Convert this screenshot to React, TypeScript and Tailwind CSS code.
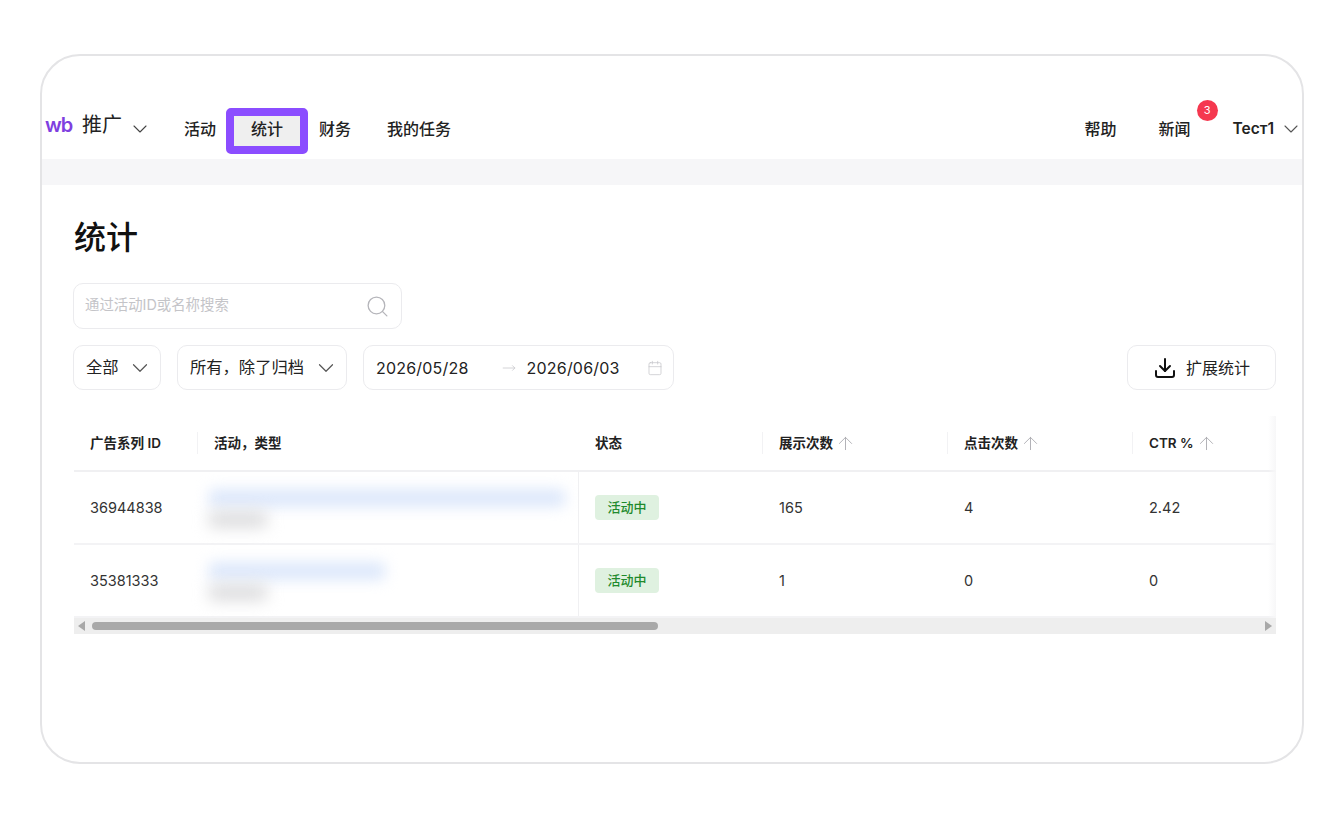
import React from 'react';
import { ChevronDown, Search, ArrowUp, MoveRight, Calendar, Download } from 'lucide-react';

const font = 'font-["Inter","Noto_Sans_CJK_SC",sans-serif]';

const columns = 'grid grid-cols-[123px_382px_183px_185px_185px_144px]';

const rows = [
    { id: '36944838', shows: '165', clicks: '4', ctr: '2.42', titleWidth: 'w-[356px]' },
    { id: '35381333', shows: '1', clicks: '0', ctr: '0', titleWidth: 'w-[176px]' },
];

function HeaderCell({ label, sort, divider }: { label: string; sort?: boolean; divider?: boolean }) {
    return (
        <div className={`flex items-center gap-[2px] pl-4 h-[22px] ${divider ? 'border-l border-[#f2f2f4]' : ''}`}>
            <span className="text-[13.5px] font-semibold text-[#222]">{label}</span>
            {sort && <ArrowUp size={21} strokeWidth={1} className="text-[#a8a8ae]" />}
        </div>
    );
}

function Select({ label, width }: { label: string; width: string }) {
    return (
        <div className={`flex items-center justify-between h-[45px] pl-3 pr-[7px] rounded-[10px] border border-[#ebebee] text-[16.3px] text-[#222] ${width}`}>
            <span>{label}</span>
            <ChevronDown size={26} strokeWidth={1.1} className="text-[#555]" />
        </div>
    );
}

function StatusBadge() {
    return (
        <span className="flex items-center justify-center w-[64px] h-[25px] rounded bg-[#dff1e0] text-[13px] font-medium text-[#1f8a2d]">
            活动中
        </span>
    );
}

export default function App() {
    return (
        <div className={`min-h-[818px] bg-white pt-[54px] px-[40px] ${font}`}>
            <div className="h-[710px] rounded-[40px] border-2 border-[#e4e4e6] overflow-hidden">
                {/* Top nav */}
                <div className="flex items-center justify-between h-[103px] pt-[42px] pl-[3px]">
                    <div className="flex items-center">
                        <span className="w-[28px] text-[20px] font-semibold leading-none text-[#7f3fe0] -mt-2 tracking-[-1px]">wb</span>
                        <span className="ml-[9px] text-xl text-[#222] -mt-2">推广</span>
                        <ChevronDown size={24} strokeWidth={1.1} className="ml-[6px] text-[#444]" />
                        <span className="ml-[32px] text-base font-medium text-[#222]">活动</span>
                        <span className="ml-[10px] mt-1 pb-1 flex items-center justify-center w-[82px] h-[46px] rounded-[5px] border-[8px] border-[#8b4dff] bg-[#efefef] text-base font-medium text-[#222]">
                            统计
                        </span>
                        <span className="ml-[11px] text-base font-medium text-[#222]">财务</span>
                        <span className="ml-[36px] text-base font-medium text-[#222]">我的任务</span>
                    </div>
                    <div className="flex items-center">
                        <span className="text-base font-medium text-[#222]">帮助</span>
                        <span className="relative ml-[42px] text-base font-medium text-[#222]">
                            新闻
                            <span className="absolute -top-[17px] left-[38px] flex items-center justify-center w-[21px] h-[21px] rounded-full bg-[#f5384f] text-[11px] font-normal text-white">
                                3
                            </span>
                        </span>
                        <span className="ml-[42px] text-[15.5px] font-semibold text-[#222]">Тест1</span>
                        <ChevronDown size={24} strokeWidth={1.1} className="ml-[5px] -mr-[1px] text-[#555]" />
                    </div>
                </div>
                <div className="h-[26px] bg-[#f6f6f8]" />

                {/* Page body */}
                <div className="pl-[31px] pr-[26px]">
                    <h1 className="mt-[31px] ml-px text-[32px] leading-[44px] font-medium text-[#111]">统计</h1>

                    <div className="mt-[23px] flex items-center justify-between w-[329px] h-[46px] pl-[11px] pr-[11px] rounded-[10px] border border-[#ebebee]">
                        <span className="pb-[3px] text-[14.4px] text-[#c4c4c8]">通过活动ID或名称搜索</span>
                        <Search size={25} strokeWidth={1.25} className="text-[#b5b5ba]" />
                    </div>

                    <div className="mt-4 flex items-center">
                        <Select label="全部" width="w-[88px]" />
                        <div className="ml-4">
                            <Select label="所有，除了归档" width="w-[170px]" />
                        </div>
                        <div className="ml-4 flex items-center w-[311px] h-[45px] pl-3 pr-[10px] rounded-[10px] border border-[#ebebee] text-base tracking-[0.2px] text-[#222]">
                            <span>2026/05/28</span>
                            <MoveRight size={14} strokeWidth={1.25} className="ml-[33px] text-[#c4c4c8]" />
                            <span className="ml-[11px]">2026/06/03</span>
                            <Calendar size={16} strokeWidth={1.1} className="ml-auto text-[#c4c4c8]" />
                        </div>
                        <div className="ml-auto flex items-center justify-center gap-[9px] w-[149px] h-[45px] rounded-[10px] border border-[#ebebee] text-base text-[#222]">
                            <Download size={24} strokeWidth={2} className="text-[#111]" />
                            <span>扩展统计</span>
                        </div>
                    </div>

                    {/* Table */}
                    <div className="relative mt-[26px] ml-px w-[1202px]">
                        <div className={`${columns} items-center h-[56px] border-b-2 border-[#f0f0f2]`}>
                            <HeaderCell label="广告系列 ID" />
                            <HeaderCell label="活动，类型" divider />
                            <HeaderCell label="状态" />
                            <HeaderCell label="展示次数" sort divider />
                            <HeaderCell label="点击次数" sort divider />
                            <HeaderCell label="CTR %" sort divider />
                        </div>
                        {rows.map((row) => (
                            <div key={row.id} className={`${columns} h-[73px] border-b-2 border-[#f3f3f5] last:border-b-0 last:h-[70px] text-[14.5px] text-[#333]`}>
                                <div className="flex items-center pl-4 pt-px">{row.id}</div>
                                <div className="flex flex-col justify-center gap-[5px] pl-[12px] border-r border-[#f0f0f2]">
                                    <div className={`h-[18px] rounded bg-[#dde8fb] blur-[7px] ${row.titleWidth}`} />
                                    <div className="h-[15px] w-[58px] rounded bg-[#d9d9db] blur-[8px]" />
                                </div>
                                <div className="flex items-center pl-4"><StatusBadge /></div>
                                <div className="flex items-center pl-[17px] pt-px">{row.shows}</div>
                                <div className="flex items-center pl-[17px] pt-px">{row.clicks}</div>
                                <div className="flex items-center pl-[17px] pt-px">{row.ctr}</div>
                            </div>
                        ))}
                        {/* Scrollbar */}
                        <div className="flex items-center h-4 bg-[#eeeeee] px-[4px]">
                            <span className="w-0 h-0 border-y-[5px] border-y-transparent border-r-[7px] border-r-[#a8a8a8]" />
                            <div className="ml-[7px] w-[566px] h-2 rounded-full bg-[#a9a9a9]" />
                            <span className="ml-auto w-0 h-0 border-y-[5px] border-y-transparent border-l-[7px] border-l-[#a8a8a8]" />
                        </div>
                        {/* Fade at the clipped right edge */}
                        <div className="absolute right-0 top-0 bottom-4 w-[8px] bg-gradient-to-l from-[#f7f7f8] to-transparent" />
                    </div>
                </div>
            </div>
        </div>
    );
}
